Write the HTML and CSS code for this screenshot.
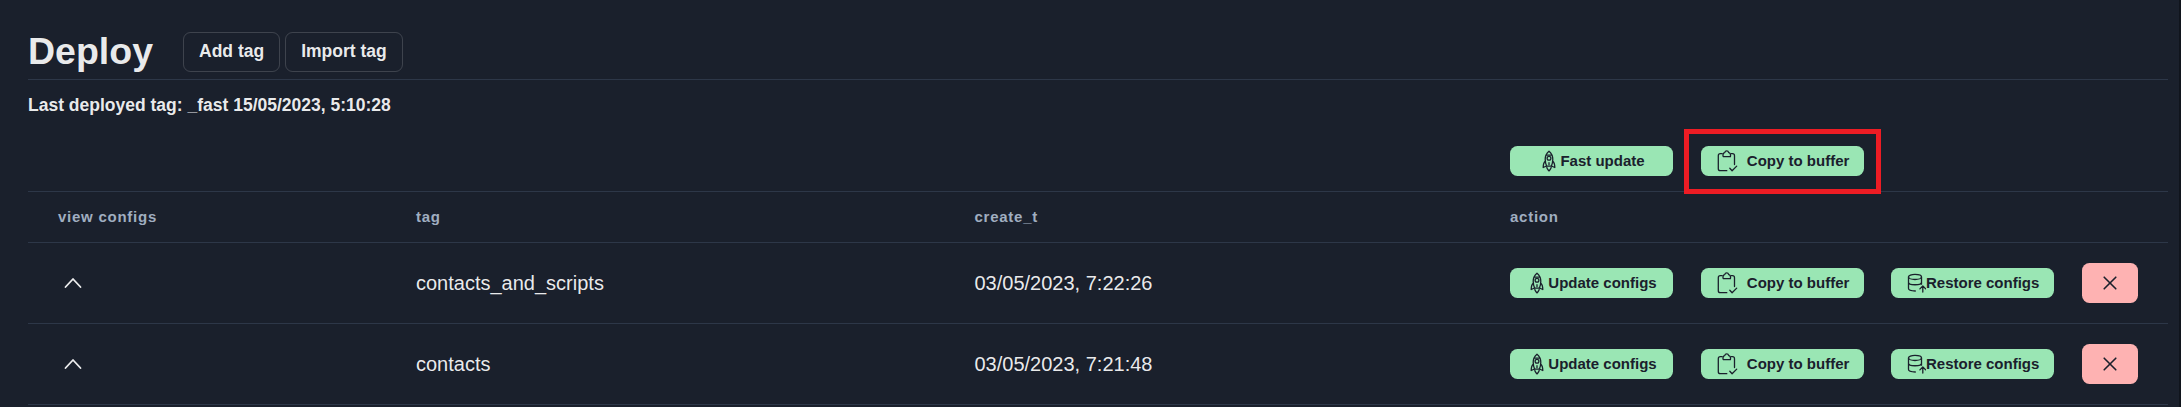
FILE: index.html
```html
<!DOCTYPE html>
<html lang="en">
<head>
<meta charset="utf-8">
<title>Deploy</title>
<link rel="stylesheet" href="styles.css">
</head>
<body>
<svg class="sprite" aria-hidden="true">
  <symbol id="rocket" viewBox="0 0 22 22">
    <path d="M11 1.200C8.400 3.400 7.200 6 7.200 9.200c0 2.600.6 4.900 1.500 7h4.600c.9-2.100 1.500-4.400 1.500-7 0-3.200-1.200-5.800-3.800-8z"/>
    <circle cx="11" cy="8.300" r="1.900"/>
    <path d="M8.800 5.200h4.400M7.300 11.200c-1.600 1.200-2.100 2.700-2.100 6.300l3.300-1.500M14.700 11.200c1.600 1.200 2.100 2.700 2.100 6.300l-3.300-1.500M11 12.700v2M8.800 17.300c0 1.400 1 2.200 2.200 3.600 1.200-1.400 2.200-2.200 2.200-3.600"/>
  </symbol>
  <symbol id="clipboard" viewBox="0 0 24 24">
    <path d="M7.200 4.700H5.300a2 2 0 0 0-2 2v13a2 2 0 0 0 2 2h6.500M16 4.700h1.500a2 2 0 0 1 2 2V15.500"/>
    <path d="M8.200 7.600h7.200c.5-2.100-.2-3.600-1.700-3.900-.3-1.200-1-1.900-2-1.900s-1.700.7-2 1.900c-1.500.3-2.100 1.800-1.500 3.900z"/>
    <path d="M14.800 19.200l2.300 2.500 4.600-4.600"/>
  </symbol>
  <symbol id="database" viewBox="0 0 20 20">
    <ellipse cx="9" cy="3.900" rx="6.500" ry="2.600"/>
    <path d="M2.500 3.900v11.700c0 1.400 2.500 2.400 6.800 2.400M15.500 3.900v7.300M2.500 9.200c0 3.400 13 3.400 13 0"/>
    <path d="M16.800 19v-5.600M13.900 15.900l2.900-2.900 2.900 2.900"/>
  </symbol>
  <symbol id="chevron" viewBox="0 0 18 12">
    <path d="M1.500 10L9 2l7.500 8"/>
  </symbol>
  <symbol id="cross" viewBox="0 0 14 14">
    <path d="M1.200 1.200l11.600 11.600M12.800 1.200L1.200 12.800"/>
  </symbol>
</svg>
<main class="page">
  <header class="page-header">
    <h1 class="title">Deploy</h1>
    <button class="outline-button">Add tag</button>
    <button class="outline-button">Import tag</button>
  </header>
  <p class="last-tag">Last deployed tag: _fast 15/05/2023, 5:10:28</p>
  <section class="table">
    <div class="row toolbar">
      <div class="cell actions">
        <button class="button"><svg class="icon rocket"><use href="#rocket"/></svg><span class="label">Fast update</span></button>
        <div class="highlighted"><button class="button"><svg class="icon clipboard"><use href="#clipboard"/></svg><span class="label">Copy to buffer</span></button></div>
      </div>
    </div>
    <div class="row head">
      <div class="cell">view configs</div>
      <div class="cell">tag</div>
      <div class="cell">create_t</div>
      <div class="cell">action</div>
    </div>
    <div class="row item">
      <div class="cell"><svg class="icon chevron"><use href="#chevron"/></svg></div>
      <div class="cell">contacts_and_scripts</div>
      <div class="cell">03/05/2023, 7:22:26</div>
      <div class="cell actions">
        <button class="button"><svg class="icon rocket"><use href="#rocket"/></svg><span class="label">Update configs</span></button>
        <button class="button"><svg class="icon clipboard"><use href="#clipboard"/></svg><span class="label">Copy to buffer</span></button>
        <button class="button"><svg class="icon database"><use href="#database"/></svg><span class="label">Restore configs</span></button>
        <button class="button delete" aria-label="Delete"><svg class="icon cross"><use href="#cross"/></svg></button>
      </div>
    </div>
    <div class="row item">
      <div class="cell"><svg class="icon chevron"><use href="#chevron"/></svg></div>
      <div class="cell">contacts</div>
      <div class="cell">03/05/2023, 7:21:48</div>
      <div class="cell actions">
        <button class="button"><svg class="icon rocket"><use href="#rocket"/></svg><span class="label">Update configs</span></button>
        <button class="button"><svg class="icon clipboard"><use href="#clipboard"/></svg><span class="label">Copy to buffer</span></button>
        <button class="button"><svg class="icon database"><use href="#database"/></svg><span class="label">Restore configs</span></button>
        <button class="button delete" aria-label="Delete"><svg class="icon cross"><use href="#cross"/></svg></button>
      </div>
    </div>
  </section>
</main>
</body>
</html>
```
FILE: styles.css
```css
* {
  box-sizing: border-box;
}

body {
  margin: 0;
  height: 407px;
  overflow: hidden;
  background: #1a202c;
  color: rgba(255, 255, 255, 0.92);
  font-family: "Liberation Sans", Arial, sans-serif;
  font-size: 20px;
}

.sprite {
  display: none;
}

.page {
  height: 407px;
  padding: 23px 11px 0 28px;
  border-right: 2px solid #10141c;
}

.page-header {
  display: flex;
  align-items: center;
  height: 57px;
  border-bottom: 1px solid #2d3748;
}

.title {
  margin: 0 30px 0 0;
  font-size: 37.5px;
  line-height: 50px;
  font-weight: 700;
}

.outline-button {
  height: 40px;
  margin: 1px 5px 0 0;
  padding: 1px 15px 0;
  border: 1px solid rgba(255, 255, 255, 0.16);
  border-radius: 7.5px;
  background: transparent;
  color: inherit;
  font: 700 17.5px/1 "Liberation Sans", Arial, sans-serif;
}

.last-tag {
  height: 51px;
  margin: 0;
  font-size: 17.5px;
  font-weight: 700;
  line-height: 50px;
}

.row {
  display: grid;
  grid-template-columns: 358px 558.5px 535.5px 1fr;
  align-items: center;
  border-bottom: 1px solid #2d3748;
}

.cell {
  padding: 0 30px;
}

.toolbar {
  height: 61px;
}

.toolbar .actions {
  grid-column: 4;
}

.head {
  height: 51px;
  padding-bottom: 2px;
  color: #a0aec0;
  font-size: 15px;
  font-weight: 700;
  letter-spacing: 0.75px;
}

.item {
  height: 81px;
}

.actions {
  display: flex;
  align-items: center;
  gap: 27.6px;
}

.button {
  display: flex;
  flex: none;
  align-items: center;
  justify-content: center;
  width: 163px;
  height: 30px;
  padding: 0;
  border: 0;
  border-radius: 7.5px;
  background: #9ae6b4;
  color: #1a202c;
  font: 700 15px/1 "Liberation Sans", Arial, sans-serif;
}

.label {
  padding-bottom: 2px;
}

.delete {
  width: 56px;
  height: 40px;
  background: #feb2b2;
}

/* The frame surrounds the button without taking up room in the row. */
.highlighted {
  flex: none;
  margin: -17px -17px -18px;
  padding: 12px 12px 13px;
  border: 5px solid #ed1c24;
  position: relative;
}

.icon {
  flex: none;
  display: block;
  fill: none;
  stroke: currentColor;
  stroke-width: 1.3;
  stroke-linecap: round;
  stroke-linejoin: round;
}

.rocket {
  width: 22px;
  height: 22px;
}

.clipboard {
  width: 24px;
  height: 24px;
  margin-right: 8px;
}

.database {
  width: 20px;
  height: 20px;
}

.chevron {
  width: 18px;
  height: 12px;
  margin-left: 6px;
  stroke-width: 1.8;
}

.cross {
  width: 14px;
  height: 14px;
  stroke-width: 1.6;
}
```
